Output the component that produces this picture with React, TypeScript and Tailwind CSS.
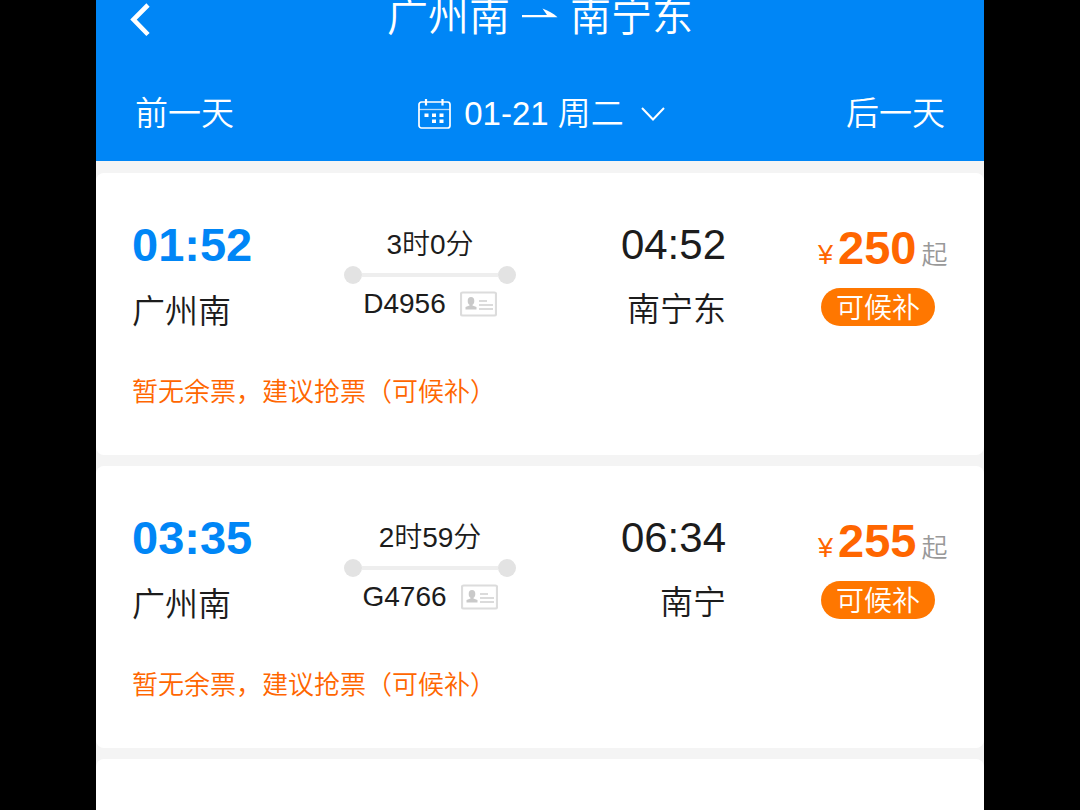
type Train = {
  depart: string;
  arrive: string;
  from: string;
  to: string;
  duration: string;
  code: string;
  price: number;
  note: string;
};

const trains: Train[] = [
  {
    depart: "01:52",
    arrive: "04:52",
    from: "广州南",
    to: "南宁东",
    duration: "3时0分",
    code: "D4956",
    price: 250,
    note: "暂无余票，建议抢票（可候补）",
  },
  {
    depart: "03:35",
    arrive: "06:34",
    from: "广州南",
    to: "南宁",
    duration: "2时59分",
    code: "G4766",
    price: 255,
    note: "暂无余票，建议抢票（可候补）",
  },
];

function BackIcon() {
  return (
    <svg width="20" height="34" viewBox="0 0 20 34" fill="none" stroke="currentColor" strokeWidth="4.6" aria-hidden="true">
      <path d="M18 2 3.500 16.500 18 31.500" />
    </svg>
  );
}

function RouteArrow() {
  return (
    <svg width="36" height="20" viewBox="0 0 36 20" fill="currentColor" aria-hidden="true">
      <path d="M0 8h25L20.500 1.500c5.500 2 11 4.800 15 8.800H0z" />
    </svg>
  );
}

function CalendarIcon() {
  return (
    <svg width="33" height="30" viewBox="0 0 33 30" fill="none" stroke="currentColor" aria-hidden="true">
      <rect x="1" y="3" width="31" height="26" rx="2.500" strokeWidth="1.700" />
      <path d="M1 10.500h31" strokeWidth="1.300" opacity=".7" />
      <path d="M8 0v6.500M24.500 0v6.500" strokeWidth="2.200" />
      <path
        d="M6.500 14.500h4v3.500h-4zM14 14.500h4v3.500h-4zM21.500 14.500h4v3.500h-4zM14 20.500h4V24h-4zM21.500 20.500h4V24h-4z"
        fill="currentColor"
        stroke="none"
      />
    </svg>
  );
}

function ChevronDown() {
  return (
    <svg width="24" height="14" viewBox="0 0 24 14" fill="none" stroke="currentColor" strokeWidth="2" aria-hidden="true">
      <path d="m1 1 11 11.500L23 1" />
    </svg>
  );
}

function IdCardIcon() {
  return (
    <svg width="37" height="26" viewBox="0 0 37 26" fill="none" aria-hidden="true">
      <rect x="1" y="1.500" width="35" height="23" rx="1.500" stroke="#dcdcdc" strokeWidth="2.200" />
      <ellipse cx="11" cy="10" rx="3.300" ry="4" fill="#c9c9c9" />
      <path d="M9.500 12h3v2.500l4 1.500v2.500h-11V16l4-1.500z" fill="#c9c9c9" />
      <path d="M19 10h8M19 14h14M19 18h14" stroke="#d0d0d0" strokeWidth="1.600" />
    </svg>
  );
}

function TrainCard({ train }: { train: Train }) {
  return (
    <article className="rounded-lg bg-white px-9 pt-12 pb-[45px]">
      <div className="flex items-start justify-between">
        <div className="flex w-[120px] flex-col gap-[23px]">
          <span className="text-[47px] leading-[48px] font-bold text-[#0086f6]">{train.depart}</span>
          <span className="text-[33px] leading-10">{train.from}</span>
        </div>

        <div className="flex w-[172px] flex-col items-center pt-2">
          <span className="text-[28px] leading-8">{train.duration}</span>
          <div className="mt-[5px] flex w-full items-center">
            <span className="size-[18px] rounded-full bg-[#e3e3e3]" />
            <span className="h-1 flex-1 bg-[#eeeeee]" />
            <span className="size-[18px] rounded-full bg-[#e3e3e3]" />
          </div>
          <div className="mt-1 flex items-center gap-[14px]">
            <span className="text-[28px] leading-8">{train.code}</span>
            <IdCardIcon />
          </div>
        </div>

        <div className="flex w-[118px] flex-col items-end gap-[21px]">
          <span className="text-[42px] leading-[48px]">{train.arrive}</span>
          <span className="text-[33px] leading-10">{train.to}</span>
        </div>

        <div className="flex w-[130px] flex-col items-start gap-4">
          <p className="flex items-baseline pt-[3px] whitespace-nowrap text-[#ff6600]">
            <span className="w-5 text-[27px] leading-8">¥</span>
            <span className="text-[47px] leading-[48px] font-bold">{train.price}</span>
            <span className="ml-[5px] text-[26px] leading-8 text-[#999999]">起</span>
          </p>
          <button
            type="button"
            className="ml-[3px] h-[38px] w-[114px] rounded-full bg-[#ff7700] pt-1 text-[28px] leading-[34px] text-white"
          >
            可候补
          </button>
        </div>
      </div>
      <p className="mt-[42px] text-[26px] leading-9 text-[#ff6600]">{train.note}</p>
    </article>
  );
}

export default function App() {
  return (
    <div className="min-h-screen bg-black px-24 font-['Liberation_Sans','Noto_Sans_CJK_SC',sans-serif] font-[350] text-[#1c1c1c]">
      <div className="flex min-h-screen flex-col bg-[#f4f4f4]">
        <header className="bg-[#0086f6] pb-[23px] text-white">
          <div className="grid grid-cols-[1fr_auto_1fr] grid-rows-[34px] items-center px-[34px]">
            <button type="button" aria-label="返回" className="w-6 pt-1.5">
              <BackIcon />
            </button>
            <h1 className="flex items-center gap-3 text-[41px] leading-9">
              广州南
              <RouteArrow />
              南宁东
            </h1>
          </div>
          <nav className="mt-14 grid h-12 grid-cols-[1fr_auto_1fr] items-center px-[39px] text-[33px] leading-10">
            <button type="button" className="justify-self-start">
              前一天
            </button>
            <button type="button" className="flex items-center gap-[13px] pl-[3px]">
              <CalendarIcon />
              <span className="mr-1">01-21 周二</span>
              <ChevronDown />
            </button>
            <button type="button" className="justify-self-end">
              后一天
            </button>
          </nav>
        </header>

        <main className="flex flex-1 flex-col gap-[11px] pt-3">
          {trains.map((train) => (
            <TrainCard key={train.code} train={train} />
          ))}
          <div className="flex-1 rounded-t-lg bg-white" />
        </main>
      </div>
    </div>
  );
}
